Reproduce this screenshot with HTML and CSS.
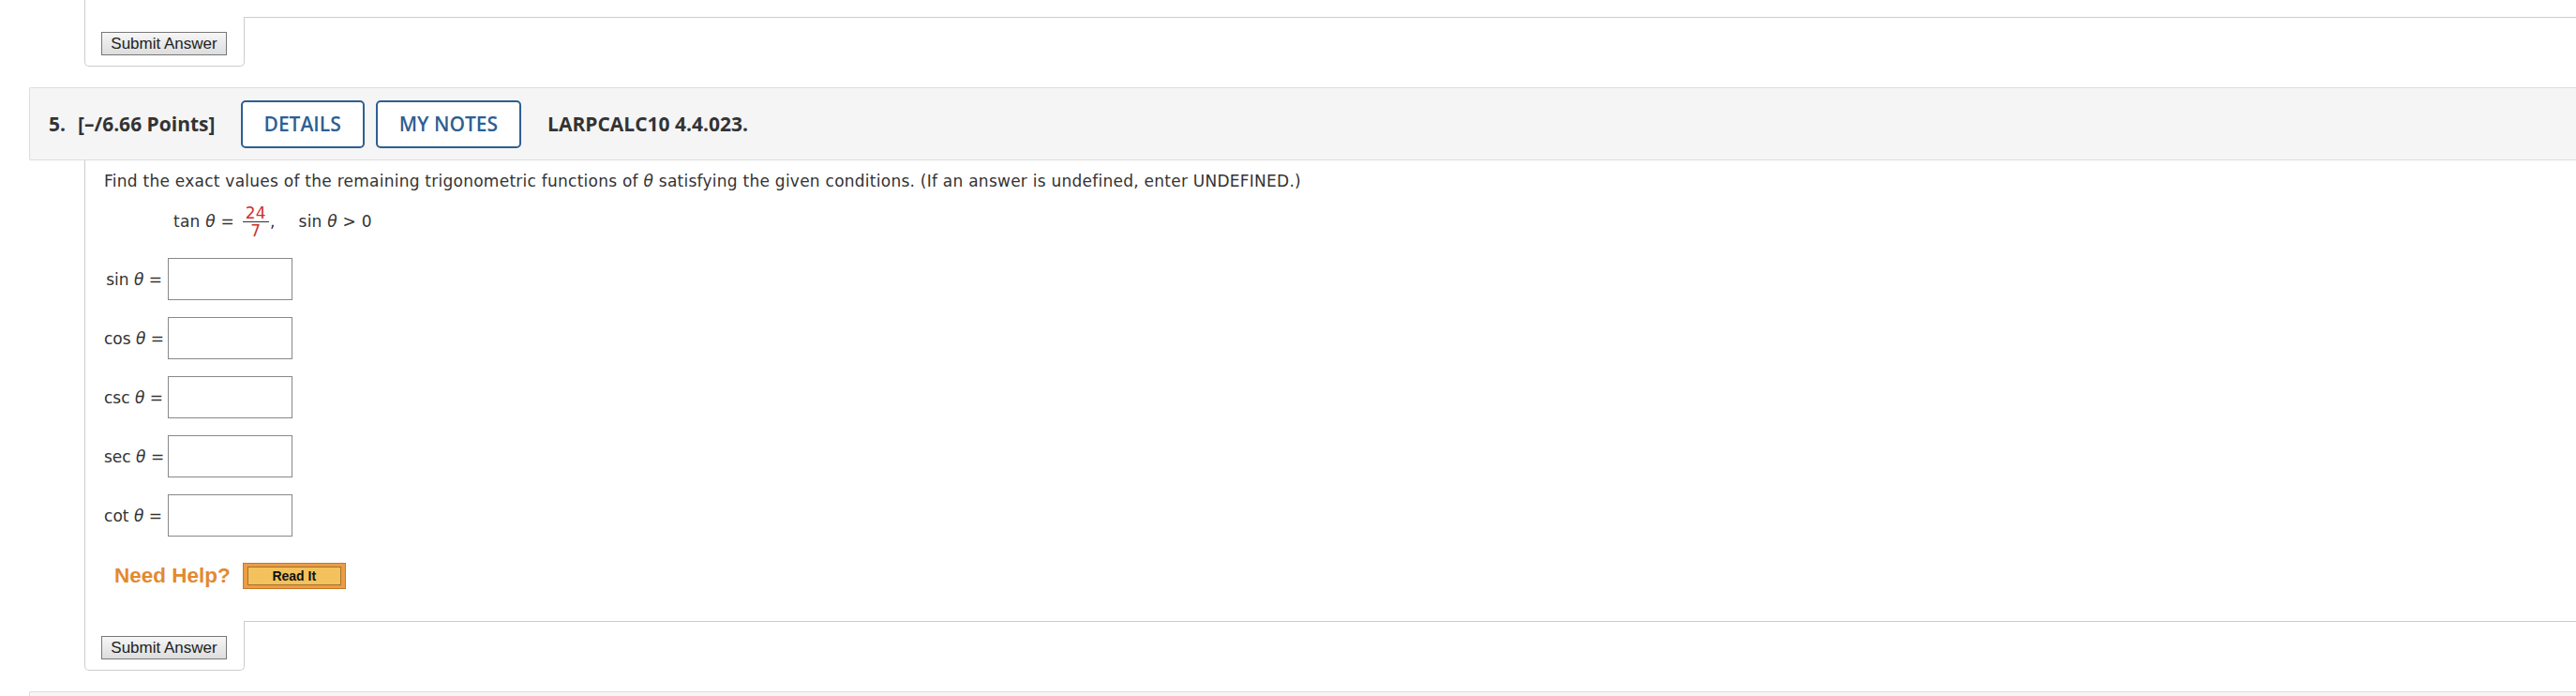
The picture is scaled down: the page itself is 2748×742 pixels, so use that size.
FILE: index.html
```html
<!DOCTYPE html>
<html>
<head>
<meta charset="utf-8">
<title>Question 5</title>
<link rel="stylesheet" href="styles.css">
</head>
<body>
  <div class="q-body">
    <div class="q-content stub"></div>
    <div class="submit-row">
      <div class="tab"><button class="submit">Submit Answer</button></div>
      <div class="fill"></div>
    </div>
  </div>

  <div class="q-header">
    <span class="q-num">5.</span>
    <span class="q-points">[–/6.66 Points]</span>
    <button class="hbtn">DETAILS</button>
    <button class="hbtn">MY NOTES</button>
    <span class="q-code">LARPCALC10 4.4.023.</span>
  </div>

  <div class="q-body">
    <div class="q-content">
      <p class="prompt">Find the exact values of the remaining trigonometric functions of <i>θ</i> satisfying the given conditions. (If an answer is undefined, enter UNDEFINED.)</p>
      <div class="given">
        <span>tan <i>θ</i> = </span><span class="frac"><span class="num">24</span><span class="den">7</span></span><span>,</span><span class="cond">sin <i>θ</i> &gt; 0</span>
      </div>
      <div class="answers">
        <div class="arow"><span class="alabel">sin <i>θ</i> =</span><input class="ainput" type="text"></div>
        <div class="arow"><span class="alabel">cos <i>θ</i> =</span><input class="ainput" type="text"></div>
        <div class="arow"><span class="alabel">csc <i>θ</i> =</span><input class="ainput" type="text"></div>
        <div class="arow"><span class="alabel">sec <i>θ</i> =</span><input class="ainput" type="text"></div>
        <div class="arow"><span class="alabel">cot <i>θ</i> =</span><input class="ainput" type="text"></div>
      </div>
      <div class="help">
        <span class="need">Need Help?</span>
        <span class="readit"><span class="readit-in">Read It</span></span>
      </div>
    </div>
    <div class="submit-row">
      <div class="tab"><button class="submit">Submit Answer</button></div>
      <div class="fill"></div>
    </div>
  </div>

  <div class="q-header next"></div>
</body>
</html>
```

FILE: styles.css
```css
html, body {
  margin: 0;
  padding: 0;
  background: #ffffff;
}
body {
  padding-left: 31px;
  font-family: "DejaVu Sans", Verdana, sans-serif;
  color: #333;
  overflow: hidden;
}

.q-body {
  margin-left: 59px;
}
.q-content {
  border-left: 1px solid #ccc;
  padding: 10px 0 34px 20px;
  letter-spacing: 0.25px;
}
.q-content.stub {
  height: 18px;
  padding: 0;
}

.submit-row {
  display: flex;
  align-items: flex-start;
}
.tab {
  box-sizing: border-box;
  width: 171px;
  border: 1px solid #ccc;
  border-top: none;
  border-radius: 0 0 5px 5px;
  padding: 16px 0 11px 17px;
}
.fill {
  flex: 1;
  border-top: 1px solid #ccc;
}
.submit {
  display: block;
  box-sizing: border-box;
  width: 134px;
  height: 25px;
  margin: 0;
  padding: 0;
  border: 1px solid #777;
  border-radius: 0;
  background: linear-gradient(#f6f6f6, #dddddd);
  font-family: "Liberation Sans", Arial, sans-serif;
  font-size: 17px;
  color: #222;
  line-height: 23px;
}

.q-header {
  margin-top: 22px;
  box-sizing: border-box;
  height: 78px;
  background: #f5f5f5;
  border: 1px solid #ddd;
  border-right: none;
  border-radius: 2px 0 0 2px;
  display: flex;
  align-items: center;
  padding-left: 20px;
  font-family: "Open Sans", sans-serif;
  font-weight: 700;
  font-size: 21px;
  color: #333;
}
.q-header.next {
  height: 10px;
}
.q-num {
  margin-right: 13px;
}
.q-points {
  margin-right: 27px;
}
.hbtn {
  box-sizing: border-box;
  height: 51px;
  margin: 0 12px 0 0;
  padding: 0 23px;
  border: 2px solid #2d5f93;
  border-radius: 5px;
  background: #fff;
  color: #2d5f93;
  font-family: "Open Sans", sans-serif;
  font-weight: 600;
  font-size: 21px;
}
.hbtn + .hbtn {
  margin-right: 28px;
}

.prompt {
  margin: 0;
  font-size: 17px;
  line-height: 24px;
}
i {
  font-style: italic;
}
.given {
  margin: 13px 0 0 74px;
  font-size: 17px;
  line-height: 24px;
}
.frac {
  display: inline-flex;
  flex-direction: column;
  align-items: stretch;
  vertical-align: middle;
  margin: 0 1px 0 3px;
  color: #d1302a;
  text-align: center;
}
.num {
  line-height: 18px;
  padding: 0 3px;
  border-bottom: 1px solid #333;
}
.den {
  line-height: 18px;
}
.cond {
  margin-left: 25px;
}

.answers {
  margin-top: 20px;
  display: flex;
  flex-direction: column;
  gap: 18px;
}
.arow {
  display: flex;
  align-items: center;
}
.alabel {
  width: 62px;
  margin-right: 6px;
  text-align: right;
  font-size: 17px;
  white-space: nowrap;
  letter-spacing: 0;
}
.ainput {
  box-sizing: border-box;
  width: 133px;
  height: 45px;
  margin: 0;
  border: 1px solid #888;
  border-radius: 0;
  background: #fff;
}

.help {
  margin-top: 28px;
  padding-left: 11px;
  display: flex;
  align-items: center;
  gap: 13px;
  letter-spacing: 0;
}
.need {
  font-family: "Liberation Sans", Arial, sans-serif;
  font-weight: 700;
  font-size: 22.5px;
  color: #e3892f;
}
.readit {
  display: block;
  box-sizing: border-box;
  width: 110px;
  height: 28px;
  padding: 3px 4px;
  border: 1px solid #c7782a;
  background: #eb9c44;
}
.readit-in {
  display: block;
  box-sizing: border-box;
  height: 20px;
  border: 1px solid #a4722f;
  background: #f3c25d;
  text-align: center;
  font-family: "Liberation Sans", Arial, sans-serif;
  font-weight: 700;
  font-size: 14px;
  line-height: 18px;
  color: #111;
}
```
